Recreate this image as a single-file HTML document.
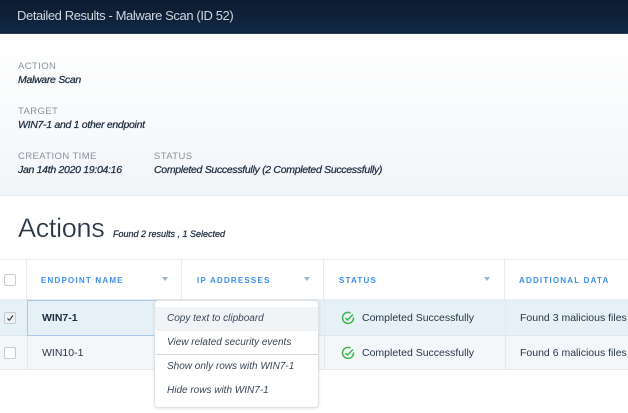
<!DOCTYPE html>
<html><head><meta charset="utf-8"><style>
*{margin:0;padding:0;box-sizing:border-box}
body{width:628px;height:413px;overflow:hidden;background:#fff;font-family:"Liberation Sans",sans-serif;position:relative;color:#1e2d3d}
.hdr{position:absolute;left:0;top:0;width:628px;height:34px;background:linear-gradient(#0c1b30,#112844);border-bottom:1px solid #2a4060}
.hdr span{position:absolute;left:17px;top:8px;font-size:13px;color:#d0d6de;letter-spacing:-.4px}
.info{position:absolute;left:0;top:34px;width:628px;height:162px;background:linear-gradient(#fff,#f2f5f8);border-bottom:1px solid #e6eaee}
.lbl{position:absolute;font-size:9.5px;color:#8a929a;letter-spacing:.4px}
.val{position:absolute;font-size:10.5px;font-style:italic;color:#1d2c40;letter-spacing:-.3px;-webkit-text-stroke:.25px #1d2c40}
.a{position:absolute;left:18px;top:213px;font-size:27px;color:#2a3645;letter-spacing:-.3px;-webkit-text-stroke:.3px #fff}
.f{position:absolute;left:113px;top:229px;font-size:9px;font-style:italic;color:#1d2c40;-webkit-text-stroke:.25px #1d2c40}
.th{position:absolute;top:259px;height:41px;border-top:1px solid #e8ecef;border-bottom:1px solid #e8ecef}
.thc{position:absolute;top:0;height:40px;border-right:1px solid #e8ecef;font-size:8px;font-weight:bold;color:#3d8fe8;letter-spacing:1.2px;padding-top:16px;white-space:nowrap}
.row{position:absolute;left:0;width:628px}
.cell{position:absolute;font-size:10.5px;color:#2a3645;white-space:nowrap}
.cb{position:absolute;left:4px;width:12px;height:12px;border:1px solid #c6ccd2;border-radius:2px;background:#fff}
.filt{position:absolute;top:17px;width:0;height:0;border-left:3px solid transparent;border-right:3px solid transparent;border-top:4px solid #9fb4c8}
.menu{position:absolute;left:154px;top:300px;width:165px;height:108px;background:#fff;border:1px solid #dde2e7;border-radius:4px;box-shadow:0 1px 3px rgba(0,0,0,.1)}
.mi{position:absolute;left:12px;font-size:10px;font-style:italic;color:#3a4656;white-space:nowrap}
.vl{position:absolute;top:300px;height:70px;border-left:1px solid #e3e8ed}
</style></head><body>
<div class="hdr"><span>Detailed Results - Malware Scan (ID 52)</span></div>
<div class="info">
<div class="lbl" style="left:18px;top:27px">ACTION</div>
<div class="val" style="left:18px;top:40px">Malware Scan</div>
<div class="lbl" style="left:18px;top:72px">TARGET</div>
<div class="val" style="left:18px;top:85px">WIN7-1 and 1 other endpoint</div>
<div class="lbl" style="left:18px;top:117px">CREATION TIME</div>
<div class="val" style="left:18px;top:130px">Jan 14th 2020 19:04:16</div>
<div class="lbl" style="left:154px;top:117px">STATUS</div>
<div class="val" style="left:154px;top:130px">Completed Successfully (2 Completed Successfully)</div>
</div>
<div class="a">Actions</div>
<div class="f">Found 2 results , 1 Selected</div>
<div class="th" style="left:0;width:628px">
<div class="thc" style="left:0;width:27px"><div class="cb" style="top:14px"></div></div>
<div class="thc" style="left:27px;width:155px;padding-left:14px">ENDPOINT NAME<div class="filt" style="left:135px"></div></div>
<div class="thc" style="left:182px;width:142px;padding-left:15px">IP ADDRESSES<div class="filt" style="left:122px"></div></div>
<div class="thc" style="left:324px;width:181px;padding-left:15px">STATUS<div class="filt" style="left:160px"></div></div>
<div class="thc" style="left:505px;width:123px;padding-left:14px;border-right:none">ADDITIONAL DATA</div>
</div>
<div class="row" style="top:300px;height:36px;background:#e6f0f7;border-bottom:1px solid #dfe6ec"></div>
<div class="row" style="top:336px;height:34px;background:#f3f7fa;border-bottom:1px solid #e3e8ed"></div>
<div class="vl" style="left:27px"></div><div class="vl" style="left:182px"></div><div class="vl" style="left:324px"></div><div class="vl" style="left:505px"></div>
<div style="position:absolute;left:27px;top:300px;width:160px;height:36px;border:1px solid #a9c8ea"></div>
<div class="cb" style="top:312px;background:#eef2f5"><svg style="position:absolute;left:1px;top:1px" width="8" height="8" viewBox="0 0 8 8"><path d="M1.5 4.5l1.8 1.8L7 1.5" fill="none" stroke="#333" stroke-width="1.1"/></svg></div>
<div class="cb" style="top:347px"></div>
<div class="cell" style="left:42px;top:312px;font-weight:bold;color:#1d2c40">WIN7-1</div>
<div class="cell" style="left:42px;top:347px">WIN10-1</div>
<svg style="position:absolute;left:341px;top:311px" width="14" height="14" viewBox="0 0 14 14"><path d="M12.5 6.5A5.5 5.5 0 1 1 9.5 2" fill="none" stroke="#3cb44a" stroke-width="1.5"/><path d="M4.5 7l2 2 5.5-5.5" fill="none" stroke="#3cb44a" stroke-width="1.5"/></svg>
<svg style="position:absolute;left:341px;top:346px" width="14" height="14" viewBox="0 0 14 14"><path d="M12.5 6.5A5.5 5.5 0 1 1 9.5 2" fill="none" stroke="#3cb44a" stroke-width="1.5"/><path d="M4.5 7l2 2 5.5-5.5" fill="none" stroke="#3cb44a" stroke-width="1.5"/></svg>
<div class="cell" style="left:362px;top:312px">Completed Successfully</div>
<div class="cell" style="left:362px;top:347px">Completed Successfully</div>
<div class="cell" style="left:520px;top:312px">Found 3 malicious files</div>
<div class="cell" style="left:520px;top:347px">Found 6 malicious files</div>
<div class="menu">
<div style="position:absolute;left:0;top:6px;width:163px;height:24px;background:#f1f4f7"></div>
<div class="mi" style="top:12px">Copy text to clipboard</div>
<div class="mi" style="top:36px">View related security events</div>
<div style="position:absolute;left:0;top:53px;width:163px;border-top:1px solid #d5dbe1"></div>
<div class="mi" style="top:60px">Show only rows with WIN7-1</div>
<div class="mi" style="top:84px">Hide rows with WIN7-1</div>
</div>
</body></html>
